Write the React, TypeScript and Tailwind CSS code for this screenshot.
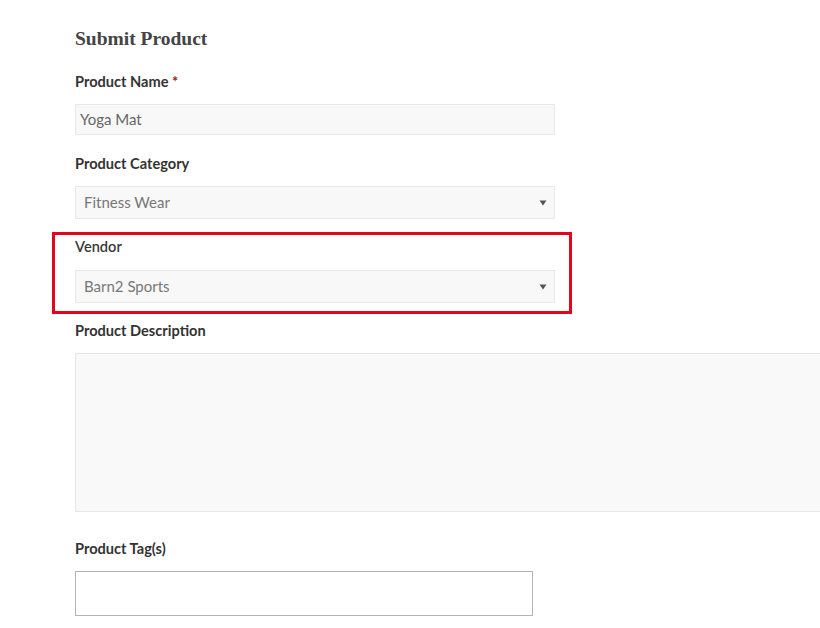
import React from "react";

const Arrow = () => (
  <svg width="8" height="6" viewBox="0 0 8 6" className="shrink-0">
    <path d="M0.5 0.5 L7.5 0.5 L4 5.5 Z" fill="#555" />
  </svg>
);

export default function App() {
  return (
    <div className="w-[820px] h-[628px] overflow-hidden bg-white">
      <div className="pl-[75px] pt-[25px] font-['Lato','Noto_Sans',sans-serif] text-[#333]">
        <h1 className="font-['Liberation_Serif','DejaVu_Serif',serif] text-[19.5px] leading-[28px] font-bold text-[#444]">
          Submit Product
        </h1>

        <div className="mt-[19px] text-[14.6px] leading-[20px] font-bold">
          Product Name <span className="text-[#9b1b1b]">*</span>
        </div>
        <div className="mt-[12px] w-[480px] h-[31px] bg-[#f8f8f8] border border-[#e8e8e8] flex items-center px-[4px] text-[15px] text-[#666]">
          Yoga Mat
        </div>

        <div className="mt-[19px] text-[14.6px] leading-[20px] font-bold">
          Product Category
        </div>
        <div className="mt-[12px] w-[480px] h-[33px] bg-[#f8f8f8] border border-[#e8e8e8] flex items-center justify-between pl-[8px] pr-[7px] text-[15px] text-[#777]">
          <span>Fitness Wear</span>
          <Arrow />
        </div>

        <div className="mt-[13px] ml-[-23px] w-[520px] border-[3px] border-[#e3061b] pl-[20px] pr-[14px] pt-[2px] pb-[8px]">
          <div className="text-[14.6px] leading-[20px] font-semibold text-[#3a3a3a]">Vendor</div>
          <div className="mt-[13px] w-[480px] h-[33px] bg-[#f8f8f8] border border-[#e8e8e8] flex items-center justify-between pl-[8px] pr-[7px] text-[15px] text-[#777]">
            <span>Barn2 Sports</span>
            <Arrow />
          </div>
        </div>

        <div className="mt-[7px] text-[14.6px] leading-[20px] font-bold">
          Product Description
        </div>
        <div className="mt-[12px] w-[780px] h-[159px] bg-[#f9f9f9] border border-[#e6e6e6]" />

        <div className="mt-[27px] text-[14.6px] leading-[20px] font-bold">
          Product Tag(s)
        </div>
        <div className="mt-[12px] w-[458px] h-[45px] bg-white border border-[#b4b4b4]" />
      </div>
    </div>
  );
}
